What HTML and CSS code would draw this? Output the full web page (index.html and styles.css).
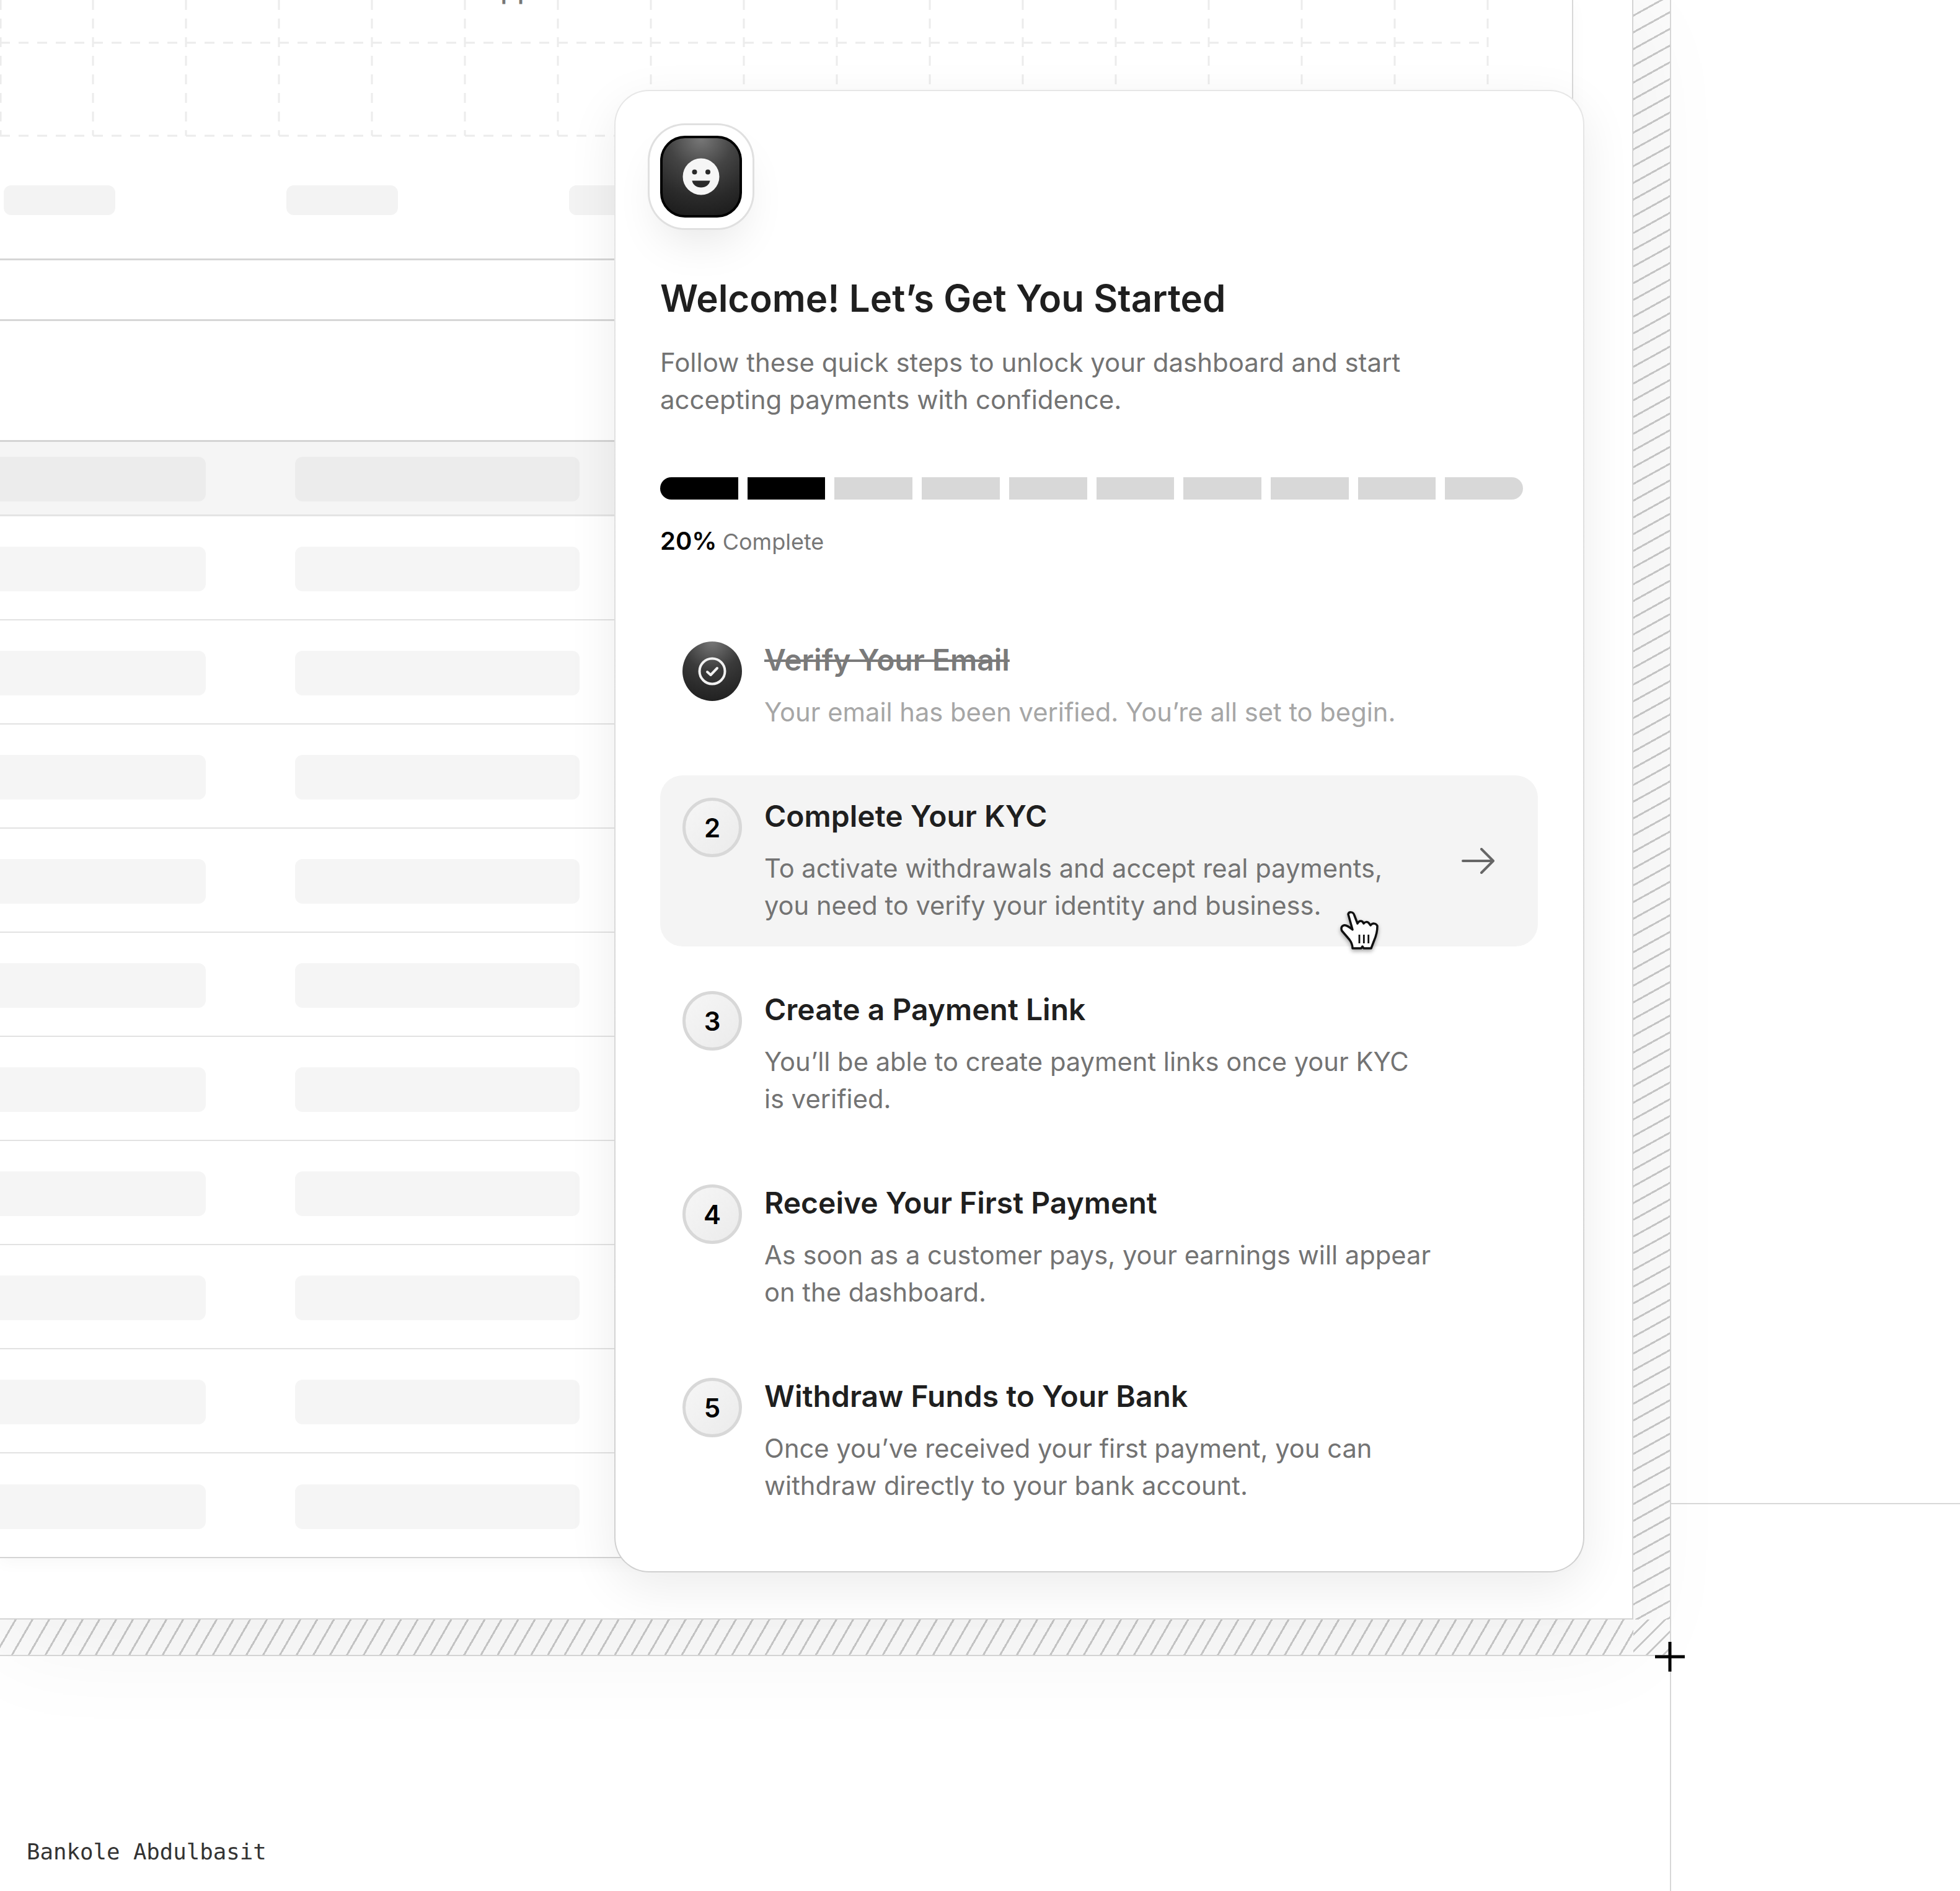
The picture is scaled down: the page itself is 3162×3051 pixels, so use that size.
FILE: index.html
```html
<!DOCTYPE html>
<html lang="en">
<head>
<meta charset="utf-8">
<title>Onboarding</title>
<link rel="stylesheet" href="styles.css">
</head>
<body>
<div class="page">
  <div class="frame">
    <div class="panel">
      <div class="sheet">
        <section class="chart">
          <span class="chart-label">Approved</span>
          <svg class="grid" width="2537" height="222" viewBox="0 0 2537 222">
            <g class="grid-lines">
              <path d="M0 69H2400M0 219H2400"/>
              <path d="M1 0V219M150 0V219M300 0V219M450 0V219M600 0V219M750 0V219M900 0V219M1050 0V219M1200 0V219M1350 0V219M1500 0V219M1650 0V219M1800 0V219M1950 0V219M2100 0V219M2250 0V219M2400 0V219"/>
            </g>
          </svg>
          <div class="pills">
            <span class="pill"></span><span class="pill"></span><span class="pill"></span>
          </div>
        </section>
        <div class="strip"></div>
        <div class="spacer"></div>
        <div class="trow thead"><span class="cell"></span><span class="cell"></span></div>
        <div class="trow"><span class="cell"></span><span class="cell"></span></div>
        <div class="trow"><span class="cell"></span><span class="cell"></span></div>
        <div class="trow"><span class="cell"></span><span class="cell"></span></div>
        <div class="trow"><span class="cell"></span><span class="cell"></span></div>
        <div class="trow"><span class="cell"></span><span class="cell"></span></div>
        <div class="trow"><span class="cell"></span><span class="cell"></span></div>
        <div class="trow"><span class="cell"></span><span class="cell"></span></div>
        <div class="trow"><span class="cell"></span><span class="cell"></span></div>
        <div class="trow"><span class="cell"></span><span class="cell"></span></div>
        <div class="trow"><span class="cell"></span><span class="cell"></span></div>
      </div>

      <aside class="card">
        <div class="logo">
          <svg width="60" height="60" viewBox="0 0 60 60">
            <circle cx="30" cy="30" r="29.5" fill="#f6f6f6"/>
            <circle cx="19.5" cy="22.5" r="4" fill="#2a2a2a"/>
            <circle cx="41" cy="22.5" r="4" fill="#2a2a2a"/>
            <path d="M15.5 36.5H44.5C43.5 43 37.5 47.5 30 47.5S16.5 43 15.5 36.5Z" fill="#2a2a2a"/>
          </svg>
        </div>
        <h1 class="title">Welcome! Let’s Get You Started</h1>
        <p class="lead">Follow these quick steps to unlock your dashboard and start accepting payments with confidence.</p>
        <div class="progress">
          <span class="seg on"></span><span class="seg on"></span><span class="seg"></span><span class="seg"></span><span class="seg"></span><span class="seg"></span><span class="seg"></span><span class="seg"></span><span class="seg"></span><span class="seg"></span>
        </div>
        <p class="percent"><strong>20%</strong> <span>Complete</span></p>
        <ol class="steps">
          <li class="step done">
            <span class="badge check">
              <svg width="48" height="48" viewBox="0 0 48 48" fill="none" stroke="#f2f2f2" stroke-width="4" stroke-linecap="round" stroke-linejoin="round">
                <circle cx="24" cy="24" r="20.5"/>
                <path d="M16 25L21.5 30L32 19"/>
              </svg>
            </span>
            <div class="step-text">
              <h2>Verify Your Email</h2>
              <p>Your email has been verified. You’re all set to begin.</p>
            </div>
          </li>
          <li class="step active">
            <span class="badge">2</span>
            <div class="step-text">
              <h2>Complete Your KYC</h2>
              <p>To activate withdrawals and accept real payments, you need to verify your identity and business.</p>
            </div>
            <svg class="arrow" width="54" height="42" viewBox="0 0 54 42" fill="none" stroke="#666" stroke-width="4" stroke-linecap="round" stroke-linejoin="round">
              <path d="M2 21H51M32 2L51 21L32 40"/>
            </svg>
            <svg class="hand" width="64" height="68" viewBox="0 0 64 68">
              <path d="M13 5C14 1 21 0 23 7L28 20C30 16 33 15 36 17L38 20C40 17 44 17 46 19L49 23C52 19 58 19 60 24C60 32 58 40 55 47L50 60H38L36 57L34 60H20C20 54 18 50 15 46L3 32C1 28 2 24 6 23C10 22 15 26 20 30Z" fill="#fff" stroke="#111" stroke-width="3.5" stroke-linejoin="round"/>
              <path d="M31 38V52M38.3 38V52M45.7 38V52" stroke="#111" stroke-width="2.8" fill="none"/>
            </svg>
          </li>
          <li class="step">
            <span class="badge">3</span>
            <div class="step-text">
              <h2>Create a Payment Link</h2>
              <p>You’ll be able to create payment links once your KYC is verified.</p>
            </div>
          </li>
          <li class="step">
            <span class="badge">4</span>
            <div class="step-text">
              <h2>Receive Your First Payment</h2>
              <p>As soon as a customer pays, your earnings will appear on the dashboard.</p>
            </div>
          </li>
          <li class="step">
            <span class="badge">5</span>
            <div class="step-text">
              <h2>Withdraw Funds to Your Bank</h2>
              <p>Once you’ve received your first payment, you can withdraw directly to your bank account.</p>
            </div>
          </li>
        </ol>
      </aside>
    </div>
    <div class="hatch hatch-right"></div>
    <div class="hatch hatch-bottom"></div>
    <div class="hatch hatch-corner"></div>
  </div>

  <div class="side">
    <div class="side-line"></div>
  </div>
  <footer class="foot"><span class="author">Bankole Abdulbasit</span></footer>
  <div class="foot-right"></div>
  <svg class="plus" width="48" height="48" viewBox="0 0 48 48"><path d="M24 0V48M0 24H48" stroke="#000" stroke-width="5"/></svg>
</div>
</body>
</html>
```
FILE: styles.css
```css
* { box-sizing: border-box; }
html, body { margin: 0; padding: 0; background: #fff; }
body { font-family: Inter, "Noto Sans", sans-serif; overflow: hidden; }

.page {
  position: relative;
  width: 3162px;
  height: 3051px;
  overflow: hidden;
  display: grid;
  grid-template-columns: 2696px 1fr;
  grid-template-rows: 2672px 1fr;
  background: #fff;
}

/* Outer frame with hatched gutters */
.frame {
  display: grid;
  grid-template-columns: 2635px 1fr;
  grid-template-rows: 2613px 1fr;
  border-right: 2px solid #d8d8d8;
  border-bottom: 2px solid #d8d8d8;
  background: #fbfbfb;
}
.hatch { background-color: transparent; }
.hatch-right {
  background-image: repeating-linear-gradient(151deg, transparent 0 20.6px, #c8c8c8 20.6px 23.6px);
  grid-column: 2; grid-row: 1;
}
.hatch-bottom {
  background-image: repeating-linear-gradient(120deg, transparent 0 20.4px, #c8c8c8 20.4px 23.4px);
  grid-column: 1; grid-row: 2;
}
.hatch-corner {
  background-image: repeating-linear-gradient(135deg, transparent 0 16px, #c8c8c8 16px 19px);
  grid-column: 2; grid-row: 2;
}

.panel {
  grid-column: 1; grid-row: 1;
  position: relative;
  z-index: 2;
  background: #fff;
  border-right: 2px solid #d4d4d4;
  border-bottom: 2px solid #d4d4d4;
  box-shadow: 0 40px 160px rgba(0, 0, 0, .05);
}

/* Placeholder dashboard sheet behind the card */
.sheet {
  width: 2538px;
  height: 2514px;
  border-right: 2px solid #d8d8d8;
  border-bottom: 2px solid #d4d4d4;
  box-shadow: 0 8px 24px rgba(0, 0, 0, .03);
  display: flex;
  flex-direction: column;
  overflow: hidden;
}
.chart {
  position: relative;
  height: 420px;
  flex: none;
  border-bottom: 3px solid #d6d6d6;
  overflow: hidden;
}
.chart-label {
  position: absolute;
  left: 776px;
  top: -48px;
  font-size: 44px;
  line-height: 60px;
  font-weight: 500;
  color: #777;
}
.grid { display: block; }
.grid-lines path {
  fill: none;
  stroke: #ececec;
  stroke-width: 3;
  stroke-dasharray: 16 14;
}
.pills {
  display: flex;
  gap: 276px;
  padding-left: 6px;
  margin-top: 77px;
}
.pill {
  flex: none;
  width: 180px;
  height: 48px;
  border-radius: 12px;
  background: #f3f3f3;
}
.strip {
  height: 98px;
  flex: none;
  border-bottom: 3px solid #d6d6d6;
}
.spacer {
  height: 195px;
  flex: none;
  border-bottom: 3px solid #d4d4d4;
}
.trow {
  height: 168px;
  flex: none;
  display: flex;
  align-items: center;
  gap: 144px;
  padding-top: 3px;
  border-bottom: 2px solid #e2e2e2;
}
.thead {
  height: 120px;
  background: #f5f5f5;
  border-bottom: 3px solid #e4e4e4;
}
.trow:last-child { border-bottom: 0; }
.cell {
  flex: none;
  width: 459px;
  height: 72px;
  border-radius: 12px;
  background: #f5f5f5;
}
.cell:first-child { margin-left: -127px; }
.thead .cell { background: #ececec; }

/* Onboarding card */
.card {
  position: absolute;
  left: 991px;
  top: 145px;
  width: 1565px;
  height: 2392px;
  padding: 72px 73px 72px 72px;
  border: 2px solid transparent;
  border-radius: 56px;
  background:
    linear-gradient(#fff, #fff) padding-box,
    linear-gradient(#e6e6e6, #d0d0d0) border-box;
  box-shadow: 0 24px 80px rgba(0, 0, 0, .08);
}
.logo {
  width: 132px;
  height: 132px;
  border-radius: 40px;
  display: flex;
  align-items: center;
  justify-content: center;
  border: 4px solid #000;
  background: radial-gradient(120% 120% at 50% 0, #787878 0, #444 35%, #2a2a2a 65%, #151515 100%);
  box-shadow: 0 0 0 17px #fff, 0 0 0 20px #e0e0e0, 0 36px 70px rgba(0, 0, 0, .1);
}
.title {
  margin: 94px 0 0;
  font-size: 60px;
  line-height: 72px;
  font-weight: 600;
  color: #1f1f1f;
}
.lead {
  margin: 38px 0 0;
  width: 1260px;
  font-size: 42px;
  line-height: 60px;
  color: #737373;
}
.progress {
  display: flex;
  gap: 15px;
  width: 1392px;
  height: 36px;
  margin-top: 95px;
  border-radius: 18px;
  overflow: hidden;
}
.seg { flex: 1; background: #d8d8d8; }
.seg.on { background: #000; }
.percent {
  margin: 37px 0 0;
  line-height: 60px;
  font-size: 40px;
  color: #000;
}
.percent strong { font-weight: 600; }
.percent span { font-size: 36px; color: #777; margin-left: -2px; }

.steps {
  list-style: none;
  margin: 95px 0 0;
  padding: 0;
  display: flex;
  flex-direction: column;
  gap: 36px;
}
.step {
  position: relative;
  display: flex;
  align-items: flex-start;
  gap: 36px;
  padding: 36px;
  border-radius: 36px;
}
.step.active { background: #f4f4f4; }
.badge {
  flex: none;
  width: 96px;
  height: 96px;
  border-radius: 50%;
  display: flex;
  align-items: center;
  justify-content: center;
  font-size: 42px;
  font-weight: 600;
  color: #000;
  border: 5px solid #d8d8d8;
  background: linear-gradient(135deg, #f6f6f6, #ebebeb);
}
.badge.check {
  border: 0;
  background: radial-gradient(110% 110% at 50% 0, #777 0, #3a3a3a 45%, #1c1c1c 100%);
}
.step-text { width: 1077px; flex: none; }
.step-text h2 {
  margin: 0;
  font-size: 48px;
  line-height: 60px;
  font-weight: 600;
  color: #1f1f1f;
}
.step-text p {
  margin: 24px 0 0;
  font-size: 41.7px;
  line-height: 60px;
  color: #737373;
}
.done h2 { color: #7a7a7a; text-decoration: line-through; text-decoration-thickness: 4px; }
.done p { color: #a6a6a6; }
.arrow {
  position: absolute;
  right: 69px;
  top: 117px;
}
.hand {
  position: absolute;
  left: 1097px;
  top: 219px;
  overflow: visible;
  filter: drop-shadow(0 3px 3px rgba(0, 0, 0, .35));
}

/* Right and lower page regions */
.side { grid-column: 2; grid-row: 1; position: relative; }
.side-line { margin-top: 2425px; border-top: 2px solid #d8d8d8; }
.foot {
  grid-column: 1; grid-row: 2;
  border-right: 2px solid #d8d8d8;
  padding: 294px 0 0 43px;
}
.foot-right { grid-column: 2; grid-row: 2; }
.author {
  font-family: "DejaVu Sans Mono", monospace;
  font-size: 35.7px;
  line-height: 44px;
  color: #333;
}
.plus {
  position: absolute;
  left: 2670px;
  top: 2649px;
  z-index: 3;
}
```
